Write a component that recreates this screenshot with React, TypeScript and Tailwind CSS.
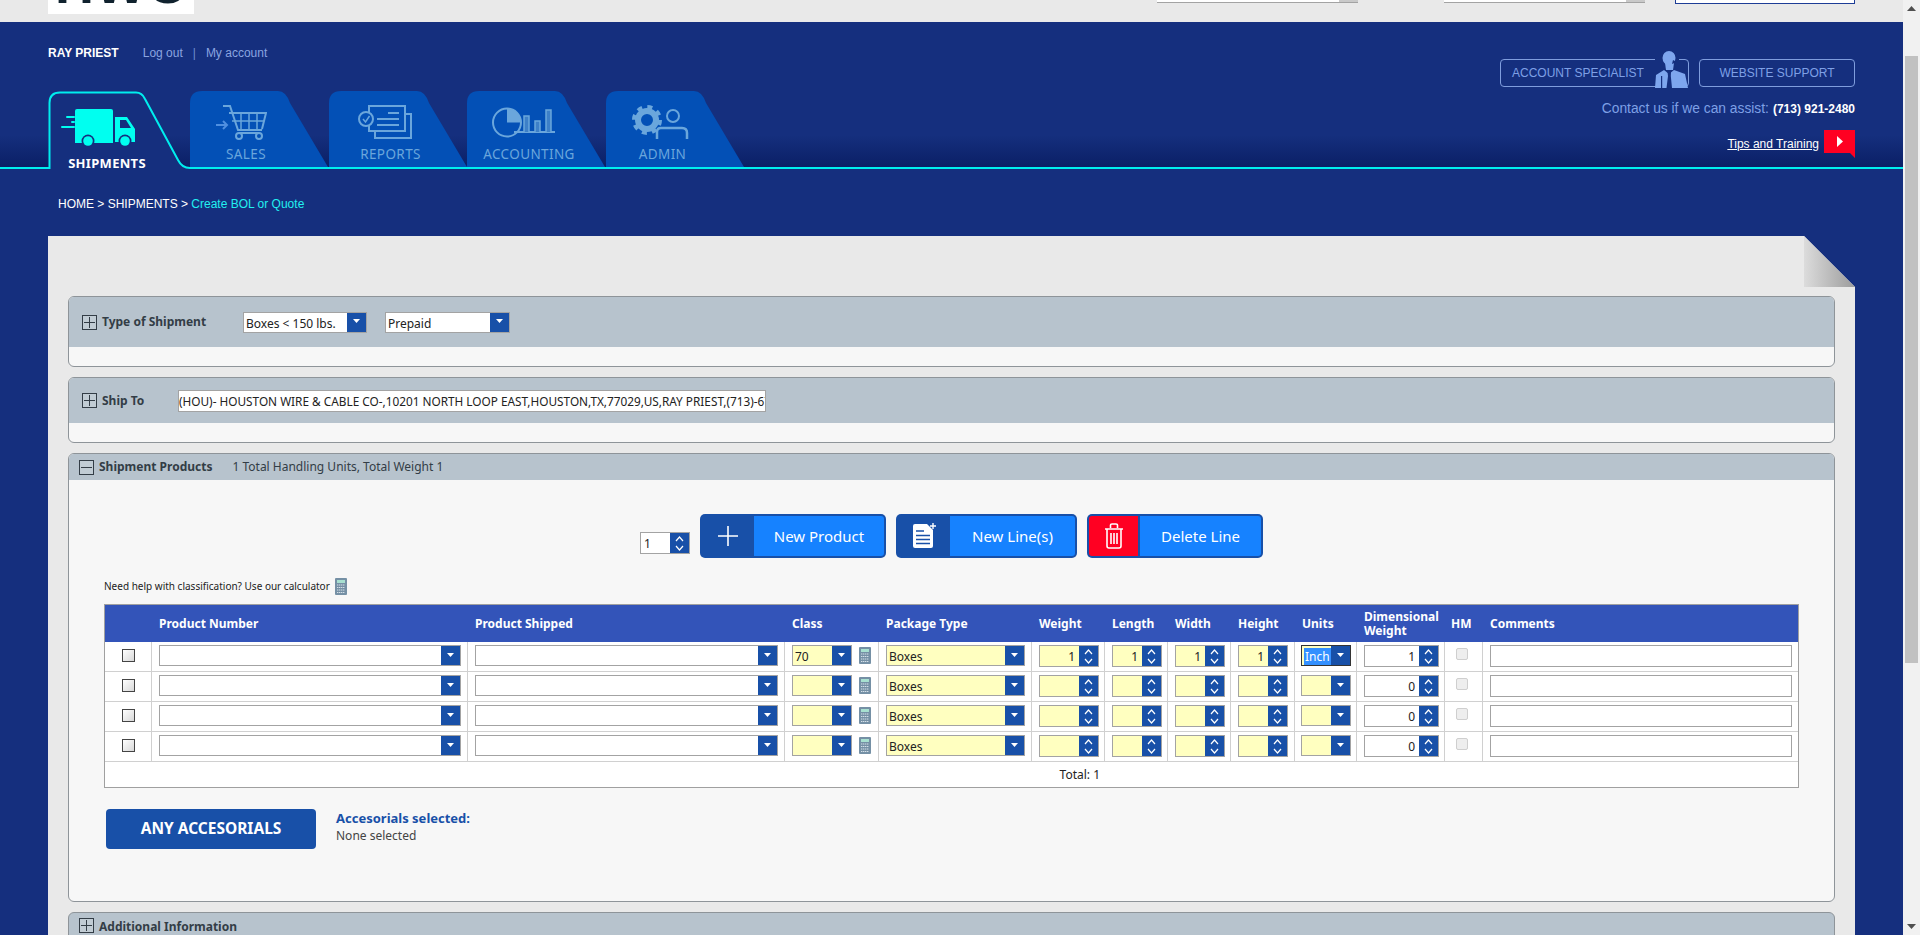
import type { ReactNode } from 'react'

const rows = [
    { cls: '70', weight: '1', length: '1', width: '1', height: '1', units: 'Inch', dim: '1' },
    { cls: '', weight: '', length: '', width: '', height: '', units: '', dim: '0' },
    { cls: '', weight: '', length: '', width: '', height: '', units: '', dim: '0' },
    { cls: '', weight: '', length: '', width: '', height: '', units: '', dim: '0' },
]

function TruckIcon() {
    return (
        <svg width="76" height="39" viewBox="0 0 76 39" fill="#00fff0">
            <rect x="5" y="8" width="9" height="2" rx="1" />
            <rect x="10" y="13" width="4" height="2" rx="1" />
            <rect x="0" y="18" width="14" height="2" rx="1" />
            <path d="M14 3 Q14 1 16 1 H50 Q52 1 52 3 V35 H14 Z" />
            <path d="M54 9 H66 L74 21 V34 H54 Z M59 12 V20 H70 L65 12 Z" fillRule="evenodd" />
            <circle cx="27" cy="33" r="6.5" fill="#152f7e" />
            <circle cx="27" cy="33" r="4.8" />
            <circle cx="64" cy="33" r="6.5" fill="#152f7e" />
            <circle cx="64" cy="33" r="4.8" />
        </svg>
    )
}

function CartIcon() {
    return (
        <svg width="52" height="35" viewBox="0 0 52 35" fill="none" stroke="#6aa6dc" strokeWidth="2">
            <path d="M8 1 H15 L23 25 H47 M14 8 H51 L47 24" />
            <path d="M17 16 H49 M26 8 V24 M34 8 V24 M42 8 V24" strokeWidth="1.5" />
            <circle cx="24" cy="31" r="3" />
            <circle cx="44" cy="31" r="3" />
            <path d="M24 28 H44" />
            <path d="M1 20 H12 M8 16 L12 20 L8 24" stroke="#4f8fe0" />
        </svg>
    )
}

function ReportsIcon() {
    return (
        <svg width="54" height="35" viewBox="0 0 54 35" fill="none" stroke="#6aa6dc" strokeWidth="2">
            <path d="M11 8 V1 H47 V26 H11 V20" />
            <path d="M47 9 H53 V33 H17 V26" />
            <circle cx="8" cy="14" r="7" />
            <path d="M5 14 L7.5 17 L11.5 11" strokeWidth="1.5" />
            <path d="M30 8 H41 M19 14 H41 M19 20 H41" />
        </svg>
    )
}

function AccountingIcon() {
    return (
        <svg width="64" height="31" viewBox="0 0 64 31" fill="none" stroke="#6aa6dc" strokeWidth="2">
            <circle cx="15" cy="15.5" r="14" />
            <path d="M15 1.5 A14 14 0 0 1 29 15.5 H15 Z" fill="#6aa6dc" stroke="none" />
            <path d="M22 25 H63" />
            <path d="M32 25 V9 H37 V25 M43 25 V14 H48 V25 M54 25 V3 H59 V25" strokeWidth="1.5" fill="#3d80c8" />
        </svg>
    )
}

function AdminIcon() {
    return (
        <svg width="58" height="35" viewBox="0 0 58 35" fill="none" stroke="#6aa6dc">
            <circle cx="15" cy="15" r="9" strokeWidth="6" />
            <circle cx="15" cy="15" r="13" strokeWidth="4" strokeDasharray="5 5.2" />
            <circle cx="41" cy="11" r="6" strokeWidth="2" />
            <path d="M25 34 V27 Q25 23 29 23 H50 Q55 23 55 28 V34" strokeWidth="2.5" />
        </svg>
    )
}

function AgentFigure() {
    return (
        <svg width="34" height="37" viewBox="0 0 34 37" fill="#7ea6ee">
            <ellipse cx="15" cy="7" rx="6.5" ry="7" />
            <path d="M11 12 H20 L19 19 H12 Z" />
            <path d="M1 37 L2 24 L10 19 L15 23 L20 19 L31 23 L34 37 Z" />
            <path d="M13.5 21 H17 L16.8 25 L18 37 H12.5 L14 25 Z" fill="#152f7e" />
            <path d="M7 25 V37 H8.2 V25 Z" fill="#152f7e" />
            <path d="M19 9 L23 11 L18 13 Z" fill="#152f7e" />
        </svg>
    )
}

function TabShape({ label, icon, labelBox, iconShift }: { label: string; icon: ReactNode; labelBox: string; iconShift: string }) {
    return (
        <div className="relative w-[137px] h-[76px] shrink-0">
            <svg className="absolute inset-0" width="138" height="76" viewBox="0 0 138 76">
                <path d="M0 76 V12 Q0 0 12 0 H88 Q96 0 100 12 L138 76 Z" fill="#0350b6" />
            </svg>
            <div className={`relative flex flex-col items-center h-full pt-[12px] ${labelBox}`}>
                <div className={`h-[38px] flex items-center ${iconShift}`}>{icon}</div>
                <span className="mt-[3px] text-[13.5px] tracking-[0.4px] leading-[20px] text-[#6aa6dc] font-['Noto_Sans',sans-serif]">{label}</span>
            </div>
        </div>
    )
}

function ArrowDown() {
    return (
        <svg width="7" height="4" viewBox="0 0 7 4" fill="#fff">
            <path d="M0 0 H7 L3.5 4 Z" />
        </svg>
    )
}

function SpinBtn() {
    return (
        <div className="w-[19px] bg-[#1850a8] flex flex-col items-center justify-center gap-[3px] shrink-0">
            <svg width="9" height="6" viewBox="0 0 9 6" fill="none" stroke="#fff" strokeWidth="1.2">
                <path d="M1 5 L4.5 1 L8 5" />
            </svg>
            <svg width="9" height="6" viewBox="0 0 9 6" fill="none" stroke="#fff" strokeWidth="1.2">
                <path d="M1 1 L4.5 5 L8 1" />
            </svg>
        </div>
    )
}

function Select({ value, yellow, focused, className }: { value?: string; yellow?: boolean; focused?: boolean; className?: string }) {
    return (
        <div className={`flex h-[21px] border ${focused ? 'border-[#333333]' : 'border-[#a3a3a3]'} ${yellow ? 'bg-[#ffffc0]' : 'bg-white'} ${className ?? 'w-full'}`}>
            <div className="flex-1 min-w-0 pl-[2px] text-[12px] leading-[21px] text-[#222222] overflow-hidden whitespace-nowrap">
                {focused ? <span className="bg-[#3390ff] text-white px-[1px]">{value}</span> : value}
            </div>
            <div className="w-[19px] bg-[#1850a8] flex items-center justify-center pb-[2px] shrink-0">
                <ArrowDown />
            </div>
        </div>
    )
}

function Spinner({ value, yellow }: { value: string; yellow?: boolean }) {
    return (
        <div className={`flex h-[22px] w-full border border-[#a3a3a3] ${yellow ? 'bg-[#ffffc0]' : 'bg-white'}`}>
            <div className="flex-1 min-w-0 pr-[4px] text-right text-[12px] leading-[22px] text-[#222222]">{value}</div>
            <SpinBtn />
        </div>
    )
}

function CalcIcon() {
    return (
        <svg width="12" height="17" viewBox="0 0 12 17" className="shrink-0">
            <rect x="0" y="0" width="12" height="17" rx="1" fill="#7590a5" />
            <rect x="2" y="2" width="8" height="3" fill="#a7e0d0" />
            <path d="M2 7 H10 M2 9.5 H10 M2 12 H10 M2 14.5 H10" stroke="#d5e0e8" strokeWidth="1" strokeDasharray="1.4 0.6" />
        </svg>
    )
}

function ToggleBox({ open }: { open?: boolean }) {
    return (
        <svg width="15" height="15" viewBox="0 0 15 15" fill="none" stroke="#333d46" className="shrink-0">
            <rect x="0.5" y="0.5" width="14" height="14" fill="#d5dce2" fillOpacity="0.35" />
            <path d={open ? 'M2 7.5 H13' : 'M2 7.5 H13 M7.5 2 V13'} />
        </svg>
    )
}

function ActionButton({ label, icon, iconBox, width }: { label: string; icon: ReactNode; iconBox: string; width: string }) {
    return (
        <button className={`flex h-[44px] ${width} rounded-[5px] bg-[#1850a8] p-[2px] overflow-hidden`}>
            <span className={`flex items-center justify-center h-full shrink-0 ${iconBox}`}>{icon}</span>
            <span className="flex-1 h-full flex items-center justify-center bg-[#1682ff] rounded-r-[3px] text-white text-[15px]">{label}</span>
        </button>
    )
}

export default function App() {
    return (
        <div className="flex w-full h-[935px] overflow-hidden bg-[#152f7e] font-['Noto_Sans',sans-serif]">
            <div className="w-[1903px] shrink-0">
                {/* top strip, page is scrolled down a little */}
                <div className="h-[22px] bg-[#e9e9e9] flex justify-between px-[48px]">
                    <div className="w-[146px] h-[14px] bg-white overflow-hidden text-center">
                        <div className="-mt-[43px] text-[54px] leading-none font-bold tracking-[1px] text-[#10222e] font-['Liberation_Sans',sans-serif]">HWC</div>
                    </div>
                    <div className="flex items-start">
                        <div className="w-[201px] h-[3px] bg-white border-b border-[#a3a3a3] flex justify-end">
                            <div className="w-[19px] bg-[#c9c9c9]"></div>
                        </div>
                        <div className="w-[201px] h-[3px] ml-[86px] bg-white border-b border-[#a3a3a3] flex justify-end">
                            <div className="w-[19px] bg-[#c9c9c9]"></div>
                        </div>
                        <div className="w-[180px] h-[4px] ml-[30px] bg-white border border-t-0 border-[#1d3d96]"></div>
                    </div>
                </div>

                {/* header */}
                <div className="h-[147px] border-b-2 border-[#00eeee] bg-gradient-to-b from-[#152f7e] from-[78%] to-[#0b1f66] px-[48px] flex justify-between font-['Liberation_Sans',sans-serif]">
                    <div>
                        <div className="flex items-center h-[16px] mt-[23px] text-[12px]">
                            <span className="font-bold text-white">RAY PRIEST</span>
                            <span className="ml-[24px] text-[#8aa4e0]">Log out</span>
                            <span className="mx-[10px] text-[#6f8cd0]">|</span>
                            <span className="text-[#8aa4e0]">My account</span>
                        </div>
                        <div className="flex mt-[30px] gap-[1.5px] items-start">
                            <div className="relative w-[140.5px] h-[78px] shrink-0">
                                <svg className="absolute inset-0" width="142" height="78" viewBox="0 0 142 78">
                                    <path d="M1.5 78 V12 Q1.5 1.5 12 1.5 H88 Q94 1.5 97 8 L130 69 Q134 77 142 77 V78 Z" fill="#152f7e" />
                                    <path d="M1.5 78 V12 Q1.5 1.5 12 1.5 H88 Q94 1.5 97 8 L130 69 Q134 77 142 77" fill="none" stroke="#00eeee" strokeWidth="2" />
                                </svg>
                                <div className="relative flex flex-col items-center w-[118px] pt-[17px]">
                                    <div className="mr-[16px]">
                                        <TruckIcon />
                                    </div>
                                    <span className="mt-[6px] text-[13px] font-bold tracking-[0.3px] leading-[20px] text-white font-['Noto_Sans',sans-serif]">SHIPMENTS</span>
                                </div>
                            </div>
                            <TabShape label="SALES" icon={<CartIcon />} labelBox="w-[112px]" iconShift="mr-[10px]" />
                            <TabShape label="REPORTS" icon={<ReportsIcon />} labelBox="w-[124px]" iconShift="mr-[12px]" />
                            <TabShape label="ACCOUNTING" icon={<AccountingIcon />} labelBox="w-[124px]" iconShift="mr-[10px]" />
                            <TabShape label="ADMIN" icon={<AdminIcon />} labelBox="w-[114px]" iconShift="mr-[4px]" />
                        </div>
                    </div>

                    <div className="flex flex-col items-end">
                        <div className="flex gap-[10px] mt-[37px]">
                            <div className="relative w-[189px] h-[28px] border border-[#7f9ddd] rounded-[4px] pl-[11px] text-[12px] leading-[26px] text-[#7ea0e6]">
                                ACCOUNT SPECIALIST
                                <div className="absolute -top-px right-[9px] w-[24px] h-[2px] bg-[#152f7e]"></div>
                                <div className="absolute -top-[9px] right-0">
                                    <AgentFigure />
                                </div>
                            </div>
                            <div className="w-[156px] h-[28px] border border-[#7f9ddd] rounded-[4px] text-center text-[12px] leading-[26px] text-[#7ea0e6]">WEBSITE SUPPORT</div>
                        </div>
                        <div className="mt-[12px] h-[20px] flex items-center">
                            <span className="text-[13.8px] text-[#7ea0e6]">Contact us if we can assist:</span>
                            <span className="ml-[4px] text-[12px] font-bold text-white">(713) 921-2480</span>
                        </div>
                        <div className="mt-[11px] flex items-start">
                            <span className="mt-[7px] text-[12px] leading-[14px] text-white underline">Tips and Training</span>
                            <svg className="ml-[5px]" width="31" height="28" viewBox="0 0 31 28">
                                <path d="M0 0 H31 V28 L26 23 H0 Z" fill="#ff0022" />
                                <path d="M13 6 L19 11.5 L13 17 Z" fill="#fff" />
                            </svg>
                        </div>
                    </div>
                </div>

                {/* breadcrumb */}
                <div className="h-[67px] pl-[58px] pt-[28px] text-[12px] leading-[14px] text-white font-['Liberation_Sans',sans-serif]">
                    HOME &gt; SHIPMENTS &gt; <span className="text-[#22f0f0]">Create BOL or Quote</span>
                </div>

                {/* page body */}
                <div className="relative mx-[48px] h-[700px] bg-[#e9e9e9] px-[20px] pt-[60px] flex flex-col gap-[10px]">
                    <svg className="absolute top-0 right-0" width="51" height="51" viewBox="0 0 51 51">
                        <defs>
                            <linearGradient id="fold" x1="0" y1="0" x2="1" y2="0">
                                <stop offset="0" stopColor="#dcdcdc" />
                                <stop offset="1" stopColor="#9c9c9c" />
                            </linearGradient>
                        </defs>
                        <polygon points="0,0 51,0 51,51" fill="#152f7e" />
                        <polygon points="0,0 51,51 0,51" fill="url(#fold)" />
                    </svg>

                    {/* Type of Shipment */}
                    <div className="h-[71px] shrink-0 rounded-[6px] border border-[#8e9499] bg-[#f7f7f7] overflow-hidden">
                        <div className="h-[50px] bg-[#b7c3cd] flex items-center pl-[13px]">
                            <ToggleBox />
                            <span className="ml-[5px] w-[141px] text-[12px] font-bold text-[#333d46]">Type of Shipment</span>
                            <Select value="Boxes < 150 lbs." className="w-[124px]" />
                            <Select value="Prepaid" className="w-[125px] ml-[18px]" />
                        </div>
                    </div>

                    {/* Ship To */}
                    <div className="h-[66px] shrink-0 rounded-[6px] border border-[#8e9499] bg-[#f7f7f7] overflow-hidden">
                        <div className="h-[45px] bg-[#b7c3cd] flex items-center pl-[13px]">
                            <ToggleBox />
                            <span className="ml-[5px] w-[76px] text-[12px] font-bold text-[#333d46]">Ship To</span>
                            <input
                                readOnly
                                value="(HOU)- HOUSTON WIRE & CABLE CO-,10201 NORTH LOOP EAST,HOUSTON,TX,77029,US,RAY PRIEST,(713)-674-0000"
                                className="w-[588px] h-[22px] bg-white border border-[#a3a3a3] text-[11.8px] text-[#222222] px-0"
                            />
                        </div>
                    </div>

                    {/* Shipment Products */}
                    <div className="h-[449px] shrink-0 rounded-[6px] border border-[#8e9499] bg-[#f7f7f7] overflow-hidden">
                        <div className="h-[26px] bg-[#b7c3cd] flex items-center pl-[10px]">
                            <ToggleBox open />
                            <span className="ml-[5px] text-[12px] font-bold text-[#333d46]">Shipment Products</span>
                            <span className="ml-[20px] text-[12px] text-[#333d46]">1 Total Handling Units, Total Weight 1</span>
                        </div>

                        <div className="flex justify-center items-end gap-[10px] mt-[34px]">
                            <div className="flex w-[50px] h-[22px] mb-[4px] border border-[#a3a3a3] bg-white">
                                <div className="flex-1 pl-[3px] text-[12px] leading-[22px] text-[#222222]">1</div>
                                <SpinBtn />
                            </div>
                            <ActionButton
                                label="New Product"
                                width="w-[186px]"
                                iconBox="w-[52px]"
                                icon={
                                    <svg width="20" height="20" viewBox="0 0 20 20" stroke="#fff" strokeWidth="1.6">
                                        <path d="M10 0 V20 M0 10 H20" />
                                    </svg>
                                }
                            />
                            <ActionButton
                                label="New Line(s)"
                                width="w-[181px]"
                                iconBox="w-[52px]"
                                icon={
                                    <svg width="26" height="26" viewBox="0 0 26 26">
                                        <path d="M2 3 Q2 1 4 1 H16 L22 7 V23 Q22 25 20 25 H4 Q2 25 2 23 Z" fill="#fff" />
                                        <path d="M5 8 H13 M5 12.5 H19 M5 16.5 H19 M5 20.5 H19" stroke="#1850a8" strokeWidth="1.6" />
                                        <path d="M22 0 V6 M19 3 H25" stroke="#fff" strokeWidth="1.4" />
                                    </svg>
                                }
                            />
                            <ActionButton
                                label="Delete Line"
                                width="w-[176px]"
                                iconBox="w-[51px] bg-[#ff0022] rounded-l-[3px] border-r-2 border-[#1850a8]"
                                icon={
                                    <svg width="20" height="26" viewBox="0 0 20 26" fill="none" stroke="#fff" strokeWidth="1.6">
                                        <path d="M1 6 H19 M6.5 5 V2 Q6.5 1 8 1 H12 Q13.5 1 13.5 2 V5" />
                                        <path d="M3 6 V23 Q3 25 5 25 H15 Q17 25 17 23 V6" />
                                        <path d="M7 10 V21 M10 10 V21 M13 10 V21" />
                                    </svg>
                                }
                            />
                        </div>

                        <div className="flex items-center h-[17px] mt-[20px] ml-[35px] text-[10px] text-[#222222]">
                            <span>Need help with classification? Use our calculator</span>
                            <span className="ml-[5px]">
                                <CalcIcon />
                            </span>
                        </div>

                        {/* products table */}
                        <div className="w-[1695px] mt-[9px] ml-[35px] border border-[#a0a0a0] bg-white">
                            <table className="w-[1693px] table-fixed border-separate border-spacing-0 text-[12px]">
                                <colgroup>
                                    <col className="w-[47px]" />
                                    <col className="w-[316px]" />
                                    <col className="w-[317px]" />
                                    <col className="w-[94px]" />
                                    <col className="w-[153px]" />
                                    <col className="w-[73px]" />
                                    <col className="w-[63px]" />
                                    <col className="w-[63px]" />
                                    <col className="w-[64px]" />
                                    <col className="w-[62px]" />
                                    <col className="w-[88px]" />
                                    <col className="w-[38px]" />
                                    <col className="w-[315px]" />
                                </colgroup>
                                <thead>
                                    <tr className="h-[37px] bg-[#3354b9] text-white text-left text-[12px] leading-[14px]">
                                        <th></th>
                                        <th className="pl-[7px] font-bold">Product Number</th>
                                        <th className="pl-[7px] font-bold">Product Shipped</th>
                                        <th className="pl-[7px] font-bold">Class</th>
                                        <th className="pl-[7px] font-bold">Package Type</th>
                                        <th className="pl-[7px] font-bold">Weight</th>
                                        <th className="pl-[7px] font-bold">Length</th>
                                        <th className="pl-[7px] font-bold">Width</th>
                                        <th className="pl-[7px] font-bold">Height</th>
                                        <th className="pl-[7px] font-bold">Units</th>
                                        <th className="pl-[7px] font-bold">Dimensional Weight</th>
                                        <th className="pl-[6px] font-bold">HM</th>
                                        <th className="pl-[7px] font-bold">Comments</th>
                                    </tr>
                                </thead>
                                <tbody>
                                    {rows.map((row, i) => (
                                        <tr key={i} className="h-[30px]">
                                            <td className="border-r border-b border-[#d0d0d0] align-top pt-[7px] pl-[17px]">
                                                <input type="checkbox" className="block appearance-none w-[13px] h-[13px] border border-[#444444] bg-gradient-to-br from-[#ffffff] to-[#d8d8d8]" />
                                            </td>
                                            <td className="border-r border-b border-[#d0d0d0] align-top pt-[3px] pl-[7px] pr-[6px]">
                                                <Select />
                                            </td>
                                            <td className="border-r border-b border-[#d0d0d0] align-top pt-[3px] pl-[7px] pr-[6px]">
                                                <Select />
                                            </td>
                                            <td className="border-r border-b border-[#d0d0d0] align-top pt-[3px] pl-[7px]">
                                                <div className="flex items-center gap-[7px]">
                                                    <Select value={row.cls} yellow className="w-[60px]" />
                                                    <CalcIcon />
                                                </div>
                                            </td>
                                            <td className="border-r border-b border-[#d0d0d0] align-top pt-[3px] pl-[7px] pr-[6px]">
                                                <Select value="Boxes" yellow />
                                            </td>
                                            <td className="border-r border-b border-[#d0d0d0] align-top pt-[3px] pl-[7px] pr-[5px]">
                                                <Spinner value={row.weight} yellow />
                                            </td>
                                            <td className="border-r border-b border-[#d0d0d0] align-top pt-[3px] pl-[7px] pr-[5px]">
                                                <Spinner value={row.length} yellow />
                                            </td>
                                            <td className="border-r border-b border-[#d0d0d0] align-top pt-[3px] pl-[7px] pr-[5px]">
                                                <Spinner value={row.width} yellow />
                                            </td>
                                            <td className="border-r border-b border-[#d0d0d0] align-top pt-[3px] pl-[7px] pr-[6px]">
                                                <Spinner value={row.height} yellow />
                                            </td>
                                            <td className="border-r border-b border-[#d0d0d0] align-top pt-[3px] pl-[6px] pr-[5px]">
                                                <Select value={row.units} yellow focused={i === 0} />
                                            </td>
                                            <td className="border-r border-b border-[#d0d0d0] align-top pt-[3px] pl-[7px] pr-[5px]">
                                                <Spinner value={row.dim} />
                                            </td>
                                            <td className="border-r border-b border-[#d0d0d0] align-top pt-[6px] pl-[11px]">
                                                <input type="checkbox" disabled className="block appearance-none w-[12px] h-[12px] rounded-[2px] border border-[#cfcfcf] bg-[#eeeeee]" />
                                            </td>
                                            <td className="border-b border-[#d0d0d0] align-top pt-[3px] pl-[7px] pr-[6px]">
                                                <input readOnly className="block w-full h-[22px] bg-white border border-[#a3a3a3]" />
                                            </td>
                                        </tr>
                                    ))}
                                    <tr className="h-[25px]">
                                        <td colSpan={5}></td>
                                        <td className="pr-[5px] pt-[1px] text-right whitespace-nowrap text-[12px] text-[#222222]">Total: 1</td>
                                        <td colSpan={7}></td>
                                    </tr>
                                </tbody>
                            </table>
                        </div>

                        <div className="flex mt-[21px] ml-[37px]">
                            <button className="w-[210px] h-[40px] rounded-[4px] bg-[#1850a8] text-white text-[15.5px] font-bold">ANY ACCESORIALS</button>
                            <div className="ml-[20px] leading-[18px]">
                                <div className="text-[13px] font-bold text-[#1850a8]">Accesorials selected:</div>
                                <div className="text-[12px] text-[#444444]">None selected</div>
                            </div>
                        </div>
                    </div>

                    {/* Additional Information */}
                    <div className="h-[60px] shrink-0 rounded-t-[6px] border border-[#8e9499] bg-[#b7c3cd] flex items-start pt-[5px] pl-[10px]">
                        <ToggleBox />
                        <span className="ml-[5px] text-[12px] font-bold text-[#333d46]">Additional Information</span>
                    </div>
                </div>
            </div>

            {/* scrollbar */}
            <div className="w-[17px] shrink-0 h-full bg-[#f1f1f1] flex flex-col">
                <div className="h-[17px] flex items-center justify-center">
                    <svg width="9" height="5" viewBox="0 0 9 5" fill="#505050">
                        <path d="M0 5 H9 L4.5 0 Z" />
                    </svg>
                </div>
                <div className="mt-[39px] mx-[2px] h-[607px] bg-[#c1c1c1]"></div>
                <div className="mt-auto h-[17px] flex items-center justify-center">
                    <svg width="9" height="5" viewBox="0 0 9 5" fill="#505050">
                        <path d="M0 0 H9 L4.5 5 Z" />
                    </svg>
                </div>
            </div>
        </div>
    )
}
